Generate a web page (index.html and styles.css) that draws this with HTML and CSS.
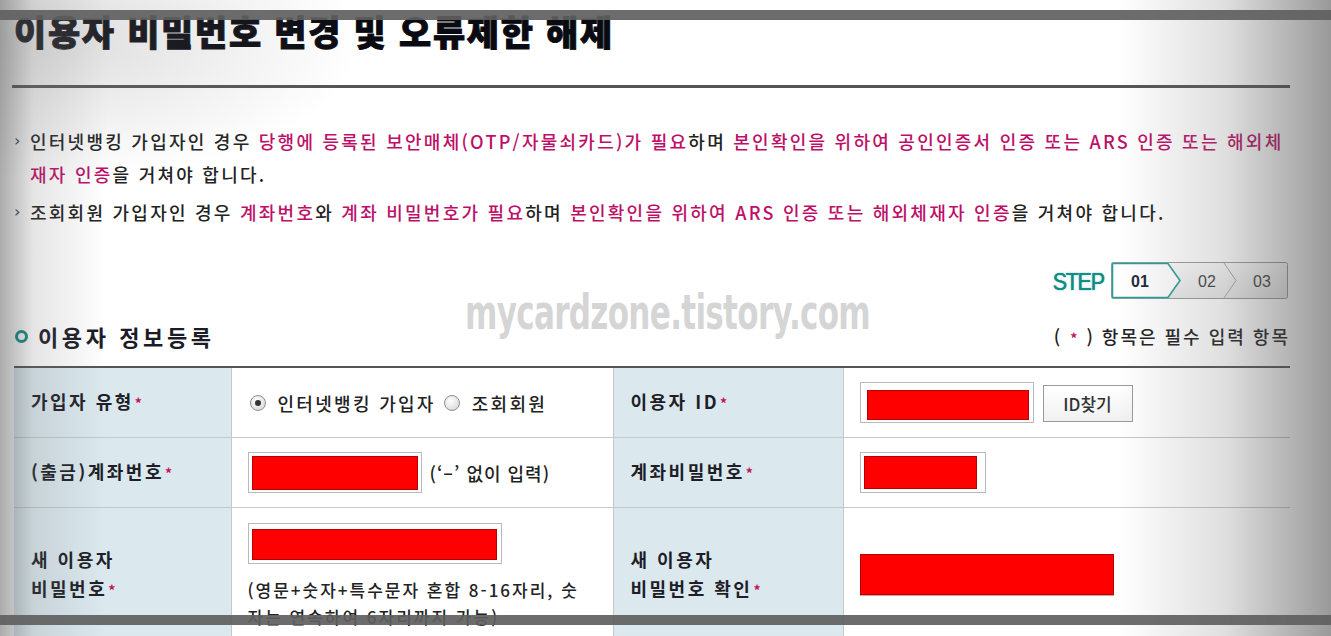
FILE: index.html
```html
<!DOCTYPE html>
<html lang="ko">
<head>
<meta charset="utf-8">
<title>이용자 비밀번호 변경 및 오류제한 해제</title>
<link rel="stylesheet" href="styles.css">
</head>
<body>
<div class="page">
  <h1 class="title">이용자 비밀번호 변경 및 오류제한 해제</h1>
  <div class="rule"></div>
  <ul class="notes">
    <li>인터넷뱅킹 가입자인 경우 <em>당행에 등록된 보안매체(OTP/자물쇠카드)가 필요</em>하며 <em>본인확인을 위하여 공인인증서 인증 또는 ARS 인증 또는 해외체재자 인증</em>을 거쳐야 합니다.</li>
    <li>조회회원 가입자인 경우 <em>계좌번호</em>와 <em>계좌 비밀번호가 필요</em>하며 <em>본인확인을 위하여 ARS 인증 또는 해외체재자 인증</em>을 거쳐야 합니다.</li>
  </ul>
  <div class="steps">
    <span class="step-label">STEP</span>
    <svg class="step-box" width="178" height="38" viewBox="0 0 178 38">
      <defs>
        <linearGradient id="sg" x1="0" y1="0" x2="0" y2="1">
          <stop offset="0" stop-color="#fbfbfb"/>
          <stop offset="1" stop-color="#e9e9e9"/>
        </linearGradient>
      </defs>
      <rect x="0.5" y="0.5" width="176" height="36" rx="2" fill="url(#sg)" stroke="#9c9c9c"/>
      <polygon points="1.5,1.5 57,1.5 69,18.5 57,35.5 1.5,35.5" fill="#ffffff" stroke="#2a9e98" stroke-width="1.6"/>
      <polyline points="113,1 125,18.5 113,36" fill="none" stroke="#a8a8a8" stroke-width="1"/>
      <text x="29" y="25" text-anchor="middle" class="s1">01</text>
      <text x="96" y="25" text-anchor="middle" class="s2">02</text>
      <text x="151" y="25" text-anchor="middle" class="s2">03</text>
    </svg>
  </div>
  <div class="section-head">
    <h2 class="section-title"><span class="dot"></span>이용자 정보등록</h2>
    <p class="required-note">( <span class="star">*</span> ) 항목은 필수 입력 항목</p>
  </div>
  <table class="form">
    <colgroup>
      <col class="c1"><col class="c2"><col class="c3"><col class="c4">
    </colgroup>
    <tr class="r1">
      <th>가입자 유형<span class="star">*</span></th>
      <td>
        <div class="radios">
          <span class="radio on"></span><span class="rlabel">인터넷뱅킹 가입자</span>
          <span class="radio"></span><span class="rlabel">조회회원</span>
        </div>
      </td>
      <th>이용자 ID<span class="star">*</span></th>
      <td>
        <div class="inline">
          <span class="field f-id"><span class="red"></span></span>
          <button class="btn">ID찾기</button>
        </div>
      </td>
    </tr>
    <tr class="r2">
      <th>(출금)계좌번호<span class="star">*</span></th>
      <td>
        <div class="inline">
          <span class="field f-acc"><span class="red"></span></span>
          <span class="hint">(‘–’ 없이 입력)</span>
        </div>
      </td>
      <th>계좌비밀번호<span class="star">*</span></th>
      <td><span class="field f-pin"><span class="red"></span></span></td>
    </tr>
    <tr class="r3">
      <th>새 이용자<br>비밀번호<span class="star">*</span></th>
      <td class="top">
        <span class="field f-new"><span class="red"></span></span>
        <p class="help">(영문+숫자+특수문자 혼합 8-16자리, 숫자는 연속하여 6자리까지 가능)</p>
      </td>
      <th>새 이용자<br>비밀번호 확인<span class="star">*</span></th>
      <td><span class="field f-conf"><span class="red"></span></span></td>
    </tr>
  </table>
</div>
<div class="watermark">mycardzone.tistory.com</div>
<div class="vignette"></div>
<div class="bar bar-top"></div>
<div class="bar bar-bottom"></div>
</body>
</html>
```
FILE: styles.css
```css
html, body {
  margin: 0;
  padding: 0;
}
body {
  width: 1331px;
  height: 636px;
  overflow: hidden;
  background: #ffffff;
  position: relative;
  font-family: "Noto Sans CJK KR", "Noto Sans", sans-serif;
  color: #222;
}
.page {
  padding: 0 41px 0 14px;
}
.title {
  margin: 0;
  padding-top: 8px;
  font-size: 35px;
  line-height: 46px;
  font-weight: 900;
  color: #0a0a12;
  letter-spacing: 1.7px;
  -webkit-text-stroke: 0.9px #0a0a12;
}
.rule {
  margin-top: 31px;
  margin-left: -2px;
  height: 3px;
  background: #555555;
}
.notes {
  list-style: none;
  margin: 37px 0 0;
  padding: 0 0 0 16px;
  font-size: 18px;
  font-weight: 500;
  line-height: 33px;
  letter-spacing: 2.25px;
  color: #222;
  word-break: break-all;
}
.notes li {
  position: relative;
  margin-bottom: 5px;
}
.notes li::before {
  content: "›";
  position: absolute;
  left: -16px;
  top: -1px;
  font-family: "DejaVu Sans", sans-serif;
  font-size: 16px;
  color: #444;
}
.notes em {
  font-style: normal;
  color: #bd0f68;
}
.steps {
  display: flex;
  justify-content: flex-end;
  align-items: center;
  gap: 7px;
  margin-top: 33px;
  height: 38px;
}
.step-label {
  font-family: "Liberation Sans", sans-serif;
  font-size: 24px;
  font-weight: 400;
  color: #148a82;
  letter-spacing: -1.5px;
  display: inline-block;
  transform: scaleX(0.9);
  transform-origin: right center;
  text-shadow: 0 0 0.8px #148a82, 0 0 3px rgba(20,160,150,0.35);
  margin-top: 1px;
}
.step-box {
  display: block;
  margin-right: 1px;
}
.step-box text {
  font-family: "Liberation Sans", sans-serif;
  font-size: 16px;
}
.step-box .s1 {
  font-weight: 700;
  fill: #1c2a38;
}
.step-box .s2 {
  fill: #444;
}
.section-head {
  display: flex;
  justify-content: space-between;
  align-items: flex-end;
  margin-top: 19px;
  height: 34px;
}
.section-title {
  margin: 0;
  display: flex;
  align-items: center;
  font-size: 22px;
  font-weight: 700;
  letter-spacing: 3.6px;
  color: #1c1c28;
  line-height: 34px;
}
.dot {
  width: 7px;
  height: 7px;
  border: 3px solid #128c8c;
  border-radius: 50%;
  margin-right: 10px;
  margin-left: 1px;
}
.required-note {
  margin: 0 0 4px;
  font-size: 18px;
  font-weight: 500;
  letter-spacing: 2px;
  color: #222;
}
.star {
  color: #c0145a;
  font-weight: 700;
  font-size: 14px;
  margin-left: 1px;
}
.form {
  width: 1276px;
  margin-top: 13px;
  border-collapse: collapse;
  border-top: 2px solid #555;
  table-layout: fixed;
}
.c1 { width: 217px; }
.c2 { width: 382px; }
.c3 { width: 230px; }
.c4 { width: 447px; }
.form th, .form td {
  border-bottom: 1px solid #c4c8ca;
  border-left: 1px solid #c4c8ca;
  padding: 0 0 0 16px;
  vertical-align: middle;
}
.form tr > :first-child {
  border-left: none;
}
.form th {
  background: #dbe9ef;
  text-align: left;
  font-size: 18px;
  font-weight: 700;
  color: #1e1e28;
  letter-spacing: 2.5px;
  line-height: 29px;
  padding-left: 17px;
}
.form td {
  background: #ffffff;
  font-size: 18px;
  font-weight: 500;
  letter-spacing: 2.3px;
  color: #222;
}
.r1 > *, .r2 > * {
  height: 69px;
}
.r3 > * {
  height: 118px;
}
.form td.top {
  vertical-align: top;
  padding-top: 15px;
}
.radios {
  display: flex;
  align-items: center;
  padding-left: 2px;
}
.radio {
  width: 16px;
  height: 16px;
  border-radius: 50%;
  border: 1px solid #8f8f8f;
  background: radial-gradient(circle at 40% 35%, #ffffff 0%, #d0d0d0 100%);
  position: relative;
  flex: none;
  box-sizing: border-box;
}
.radio.on::after {
  content: "";
  position: absolute;
  left: 4px;
  top: 4px;
  width: 6px;
  height: 6px;
  border-radius: 50%;
  background: #333;
}
.rlabel {
  margin-left: 12px;
  margin-right: 8px;
}
.inline {
  display: flex;
  align-items: center;
  gap: 8px;
}
.field {
  display: inline-flex;
  box-sizing: border-box;
  border: 1px solid #b9b9b9;
  background: #fff;
  padding: 3px 3px 2px 3px;
  vertical-align: middle;
}
.red {
  display: block;
  flex: 1;
  background: #ff0000;
  border: 1px solid #b80000;
  box-sizing: border-box;
}
.f-id {
  width: 174px;
  height: 41px;
  padding: 7px 4px 2px 6px;
}
.f-acc {
  width: 174px;
  height: 41px;
}
.f-pin {
  width: 126px;
  height: 41px;
  padding: 3px 8px 3px 3px;
}
.f-new {
  width: 254px;
  height: 41px;
  padding: 5px 4px 3px 3px;
}
.f-conf {
  width: 254px;
  height: 41px;
  padding: 0;
  border: none;
  box-shadow: 0 1px 0 #d8a0a0;
}
.btn {
  height: 37px;
  width: 90px;
  border: 1px solid #9a9a9a;
  background: linear-gradient(#ffffff, #f1f1f1);
  font-family: "Noto Sans CJK KR", sans-serif;
  font-size: 17px;
  font-weight: 500;
  color: #333;
  letter-spacing: 0;
  margin-left: 1px;
  margin-top: 2px;
}
.hint {
  font-size: 18px;
  letter-spacing: 1px;
}
.help {
  margin: 12px 0 0;
  width: 345px;
  line-height: 27px;
  font-size: 17px;
  letter-spacing: 2px;
  word-break: break-all;
}
.watermark {
  position: absolute;
  left: 465px;
  top: 284px;
  font-family: "Liberation Sans Narrow", "DejaVu Sans Condensed", "Liberation Sans", sans-serif;
  font-weight: 700;
  font-size: 48px;
  color: rgba(208, 208, 208, 0.88);
  letter-spacing: -1px;
  transform: scaleX(0.72);
  transform-origin: left center;
  white-space: nowrap;
  pointer-events: none;
}
.vignette {
  position: absolute;
  inset: 0;
  pointer-events: none;
  background:
    linear-gradient(90deg, rgba(70,70,70,0.45) 0%, rgba(110,110,110,0.18) 2.5%, rgba(255,255,255,0) 8%, rgba(255,255,255,0) 84%, rgba(110,110,110,0.22) 92%, rgba(70,70,70,0.55) 100%),
    radial-gradient(ellipse 300px 140px at 60px 40px, rgba(120,120,120,0.25), rgba(255,255,255,0));
}
.bar {
  position: absolute;
  left: 0;
  right: 0;
  height: 10px;
  background: rgba(95, 95, 95, 0.92);
  pointer-events: none;
}
.bar-top { top: 10px; }
.bar-bottom { top: 615px; }
```
